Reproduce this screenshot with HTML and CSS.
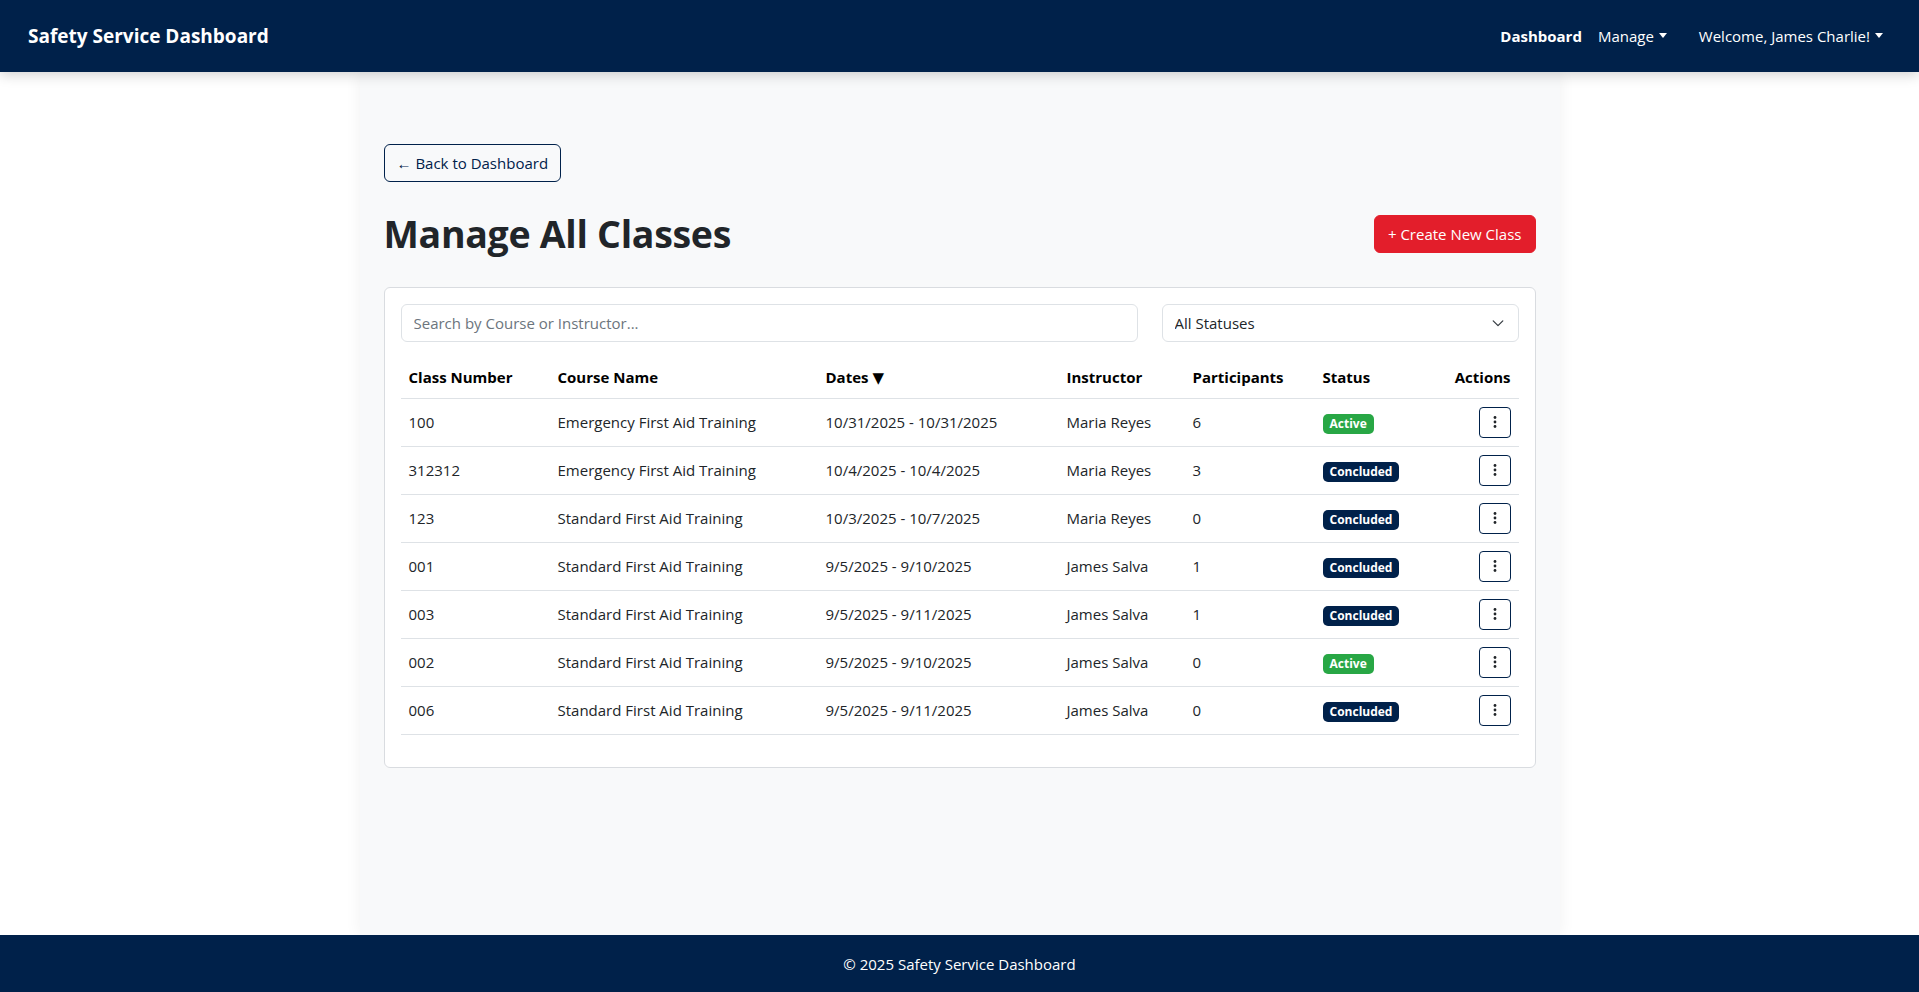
FILE: index.html
```html
<!DOCTYPE html>
<html lang="en">
<head>
<meta charset="utf-8">
<title>Manage All Classes - Safety Service Dashboard</title>
<link rel="stylesheet" href="styles.css">
</head>
<body>
<nav class="navbar">
  <a class="brand" href="#">Safety Service Dashboard</a>
  <div class="nav-right">
    <a class="nav-link active" href="#">Dashboard</a>
    <a class="nav-link dropdown" href="#">Manage</a>
    <a class="nav-link dropdown welcome" href="#">Welcome, James Charlie!</a>
  </div>
</nav>

<main class="main">
  <div class="page">
    <a class="btn btn-outline back-btn" href="#">&larr; Back to Dashboard</a>
    <div class="page-head">
      <h1 class="title">Manage All Classes</h1>
      <a class="btn btn-danger" href="#">+ Create New Class</a>
    </div>

    <div class="card">
      <div class="filters">
        <input class="form-control search" type="text" placeholder="Search by Course or Instructor...">
        <div class="select-wrap">
          <select class="form-select">
            <option>All Statuses</option>
            <option>Active</option>
            <option>Concluded</option>
          </select>
          <svg class="chev" width="14" height="14" viewBox="0 0 16 16"><path d="M2.5 5.5l5.5 5.5 5.5-5.5" fill="none" stroke="#343a40" stroke-width="1.4" stroke-linecap="round" stroke-linejoin="round"/></svg>
        </div>
      </div>

      <table class="table">
        <colgroup>
          <col class="c1"><col class="c2"><col class="c3"><col class="c4"><col class="c5"><col class="c6"><col class="c7">
        </colgroup>
        <thead>
          <tr>
            <th>Class Number</th>
            <th>Course Name</th>
            <th>Dates <span class="sort">&#9660;</span></th>
            <th>Instructor</th>
            <th>Participants</th>
            <th>Status</th>
            <th class="end">Actions</th>
          </tr>
        </thead>
        <tbody>
          <tr><td>100</td><td>Emergency First Aid Training</td><td>10/31/2025 - 10/31/2025</td><td>Maria Reyes</td><td>6</td><td><span class="badge active">Active</span></td><td class="end"><button class="kebab"><svg width="4" height="14" viewBox="0 0 4 14"><circle cx="2" cy="2.5" r="1.4"/><circle cx="2" cy="7" r="1.4"/><circle cx="2" cy="11.5" r="1.4"/></svg></button></td></tr>
          <tr><td>312312</td><td>Emergency First Aid Training</td><td>10/4/2025 - 10/4/2025</td><td>Maria Reyes</td><td>3</td><td><span class="badge concluded">Concluded</span></td><td class="end"><button class="kebab"><svg width="4" height="14" viewBox="0 0 4 14"><circle cx="2" cy="2.5" r="1.4"/><circle cx="2" cy="7" r="1.4"/><circle cx="2" cy="11.5" r="1.4"/></svg></button></td></tr>
          <tr><td>123</td><td>Standard First Aid Training</td><td>10/3/2025 - 10/7/2025</td><td>Maria Reyes</td><td>0</td><td><span class="badge concluded">Concluded</span></td><td class="end"><button class="kebab"><svg width="4" height="14" viewBox="0 0 4 14"><circle cx="2" cy="2.5" r="1.4"/><circle cx="2" cy="7" r="1.4"/><circle cx="2" cy="11.5" r="1.4"/></svg></button></td></tr>
          <tr><td>001</td><td>Standard First Aid Training</td><td>9/5/2025 - 9/10/2025</td><td>James Salva</td><td>1</td><td><span class="badge concluded">Concluded</span></td><td class="end"><button class="kebab"><svg width="4" height="14" viewBox="0 0 4 14"><circle cx="2" cy="2.5" r="1.4"/><circle cx="2" cy="7" r="1.4"/><circle cx="2" cy="11.5" r="1.4"/></svg></button></td></tr>
          <tr><td>003</td><td>Standard First Aid Training</td><td>9/5/2025 - 9/11/2025</td><td>James Salva</td><td>1</td><td><span class="badge concluded">Concluded</span></td><td class="end"><button class="kebab"><svg width="4" height="14" viewBox="0 0 4 14"><circle cx="2" cy="2.5" r="1.4"/><circle cx="2" cy="7" r="1.4"/><circle cx="2" cy="11.5" r="1.4"/></svg></button></td></tr>
          <tr><td>002</td><td>Standard First Aid Training</td><td>9/5/2025 - 9/10/2025</td><td>James Salva</td><td>0</td><td><span class="badge active">Active</span></td><td class="end"><button class="kebab"><svg width="4" height="14" viewBox="0 0 4 14"><circle cx="2" cy="2.5" r="1.4"/><circle cx="2" cy="7" r="1.4"/><circle cx="2" cy="11.5" r="1.4"/></svg></button></td></tr>
          <tr><td>006</td><td>Standard First Aid Training</td><td>9/5/2025 - 9/11/2025</td><td>James Salva</td><td>0</td><td><span class="badge concluded">Concluded</span></td><td class="end"><button class="kebab"><svg width="4" height="14" viewBox="0 0 4 14"><circle cx="2" cy="2.5" r="1.4"/><circle cx="2" cy="7" r="1.4"/><circle cx="2" cy="11.5" r="1.4"/></svg></button></td></tr>
        </tbody>
      </table>
    </div>
  </div>
</main>

<footer class="footer">&copy; 2025 Safety Service Dashboard</footer>
</body>
</html>
```

FILE: styles.css
```css
* { box-sizing: border-box; }

html, body { height: 100%; }

body {
  margin: 0;
  min-height: 100vh;
  display: flex;
  flex-direction: column;
  font-family: "Open Sans", "Noto Sans", "Liberation Sans", sans-serif;
  font-size: 15px;
  line-height: 24px;
  color: #212529;
  background: #ffffff;
}

a { text-decoration: none; }

/* Navbar */
.navbar {
  position: relative;
  z-index: 2;
  height: 72px;
  flex: 0 0 72px;
  background: #00214a;
  display: flex;
  align-items: center;
  justify-content: space-between;
  padding: 0 28px;
  box-shadow: 0 3px 12px rgba(0, 0, 0, 0.18);
}

.brand {
  color: #ffffff;
  font-weight: 700;
  font-size: 19px;
  line-height: 30px;
}

.nav-right {
  display: flex;
  align-items: center;
}

.nav-link {
  color: #ffffff;
  padding: 0 8px;
  font-size: 15px;
}

.nav-link.active { font-weight: 700; }

.nav-link.welcome { margin-left: 16px; }

.dropdown::after {
  content: "";
  display: inline-block;
  margin-left: 5px;
  vertical-align: 4px;
  border-top: 5px solid #ffffff;
  border-left: 4.5px solid transparent;
  border-right: 4.5px solid transparent;
}

/* Main */
.main {
  flex: 1 0 auto;
  display: flex;
  justify-content: center;
}

.page {
  width: 1200px;
  background: #f8f9fa;
  padding: 72px 24px 48px;
  box-shadow: 0 0 16px rgba(0, 0, 0, 0.06);
}

.btn {
  display: inline-block;
  padding: 6px 12px;
  font-size: 15px;
  line-height: 24px;
  border-radius: 6px;
  border: 1px solid transparent;
}

.btn-outline {
  color: #00214a;
  border-color: #00214a;
  background: transparent;
}

.back-btn { margin-bottom: 28px; }

.btn-danger {
  background: #e31e2b;
  border-color: #e31e2b;
  color: #ffffff;
  padding: 6px 13px;
}

.page-head {
  display: flex;
  align-items: center;
  justify-content: space-between;
  height: 48px;
  margin-bottom: 29px;
}

.title {
  margin: 0;
  font-size: 37.5px;
  line-height: 48px;
  font-weight: 700;
  color: #212529;
  letter-spacing: -0.3px;
}

/* Card */
.card {
  background: #ffffff;
  border: 1px solid #d9dce0;
  border-radius: 6px;
  padding: 16px;
}

.filters {
  display: grid;
  grid-template-columns: 737px 1fr;
  column-gap: 24px;
  margin-bottom: 15px;
}

.form-control,
.form-select {
  display: block;
  width: 100%;
  height: 38px;
  padding: 6px 12px;
  font-family: inherit;
  font-size: 15px;
  line-height: 24px;
  color: #212529;
  background: #ffffff;
  border: 1px solid #dee2e6;
  border-radius: 6px;
  outline: none;
}

.form-control::placeholder { color: #6c757d; }

.select-wrap { position: relative; }

.form-select {
  appearance: none;
  -webkit-appearance: none;
  padding-right: 36px;
}

.chev {
  position: absolute;
  right: 14px;
  top: 12px;
  pointer-events: none;
}

/* Table */
.table {
  width: 100%;
  border-collapse: collapse;
  table-layout: fixed;
  margin-bottom: 16px;
}

.c1 { width: 149px; }
.c2 { width: 268px; }
.c3 { width: 241px; }
.c4 { width: 126px; }
.c5 { width: 130px; }
.c6 { width: 125px; }
.c7 { width: 79px; }

.table th,
.table td {
  padding: 8px;
  text-align: left;
  vertical-align: middle;
  border-bottom: 1px solid #dee2e6;
  white-space: nowrap;
}

.table th {
  height: 41px;
  font-weight: 700;
  color: #000000;
  font-size: 15px;
}

.sort {
  font-family: "DejaVu Sans", sans-serif;
  font-size: 15px;
  line-height: 0;
}

.table .end { text-align: right; }

.badge {
  display: inline-block;
  font-size: 12px;
  font-weight: 700;
  line-height: 12px;
  padding: 4px 7px;
  border-radius: 5px;
  color: #ffffff;
  vertical-align: middle;
}

.badge.active { background: #28a745; }
.badge.concluded { background: #00214a; }

.kebab {
  display: inline-flex;
  align-items: center;
  justify-content: center;
  width: 32px;
  height: 31px;
  padding: 0;
  background: #ffffff;
  border: 1px solid #00214a;
  border-radius: 4px;
  vertical-align: middle;
  fill: #212529;
}

/* Footer */
.footer {
  flex: 0 0 57px;
  height: 57px;
  background: #00214a;
  color: #ffffff;
  display: flex;
  align-items: center;
  justify-content: center;
  font-size: 15px;
}
```
